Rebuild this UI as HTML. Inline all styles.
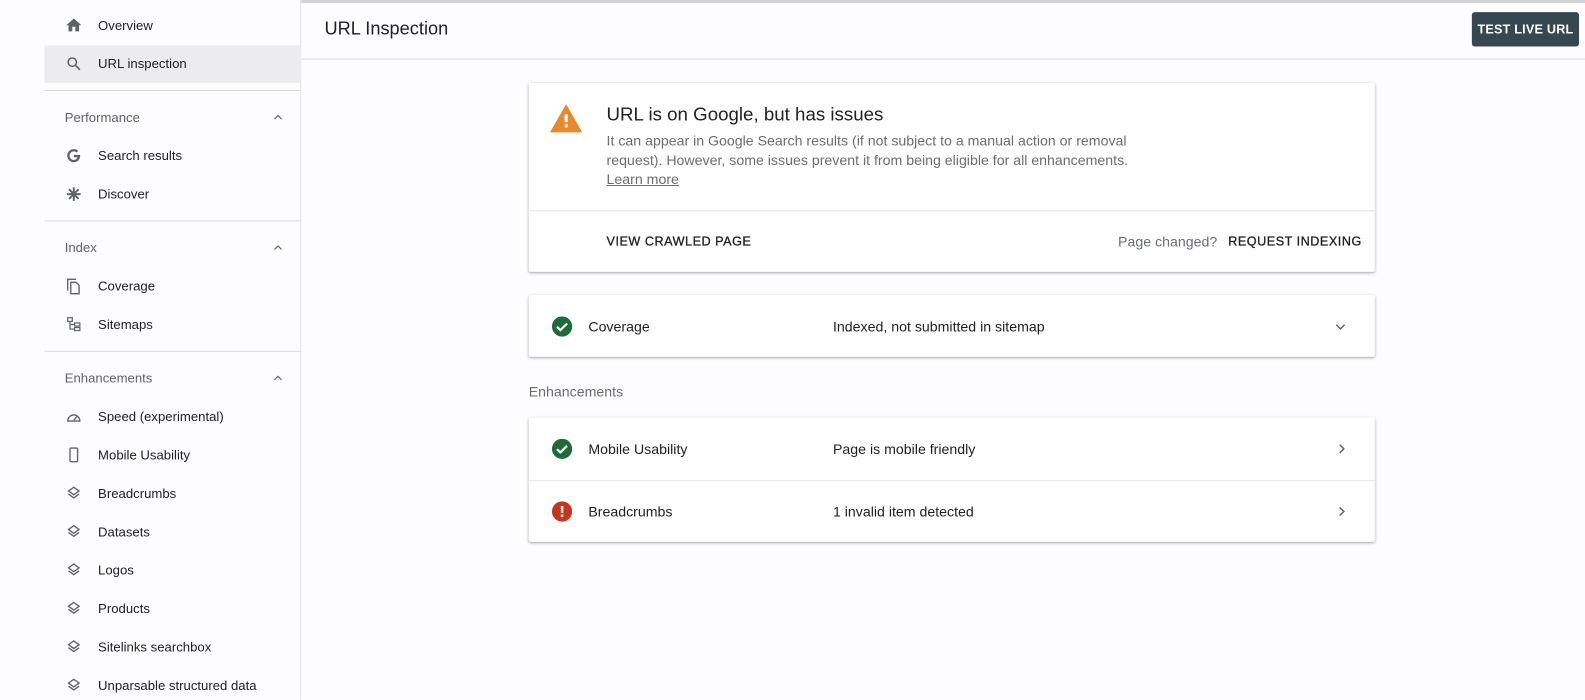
<!DOCTYPE html>
<html><head><meta charset="utf-8"><style>
*{margin:0;padding:0;box-sizing:border-box}
body{width:1585px;height:692px;overflow:hidden;background:#fdfcfe;font-family:"Liberation Sans",sans-serif;position:relative;color:#202124}
#w{position:absolute;left:0;top:0;width:1568px;height:685px;transform:scale(1.0109);transform-origin:0 0}
.a{position:absolute;white-space:nowrap}
.side{position:absolute;left:44px;top:0;width:254px;height:692px;background:#fdfcfe;border-right:1px solid #e2e2e4}
.it{position:absolute;left:53px;font-size:13px;color:#202124;transform:translateY(-50%)}
.hd{position:absolute;left:20px;font-size:13px;color:#5f6368;transform:translateY(-50%)}
.ic{position:absolute;left:20px;width:18px;height:18px;transform:translateY(-50%)}
.chev{position:absolute;left:224px;width:14px;height:14px;transform:translateY(-50%)}
.dv{position:absolute;left:0;width:254px;height:1px;background:#dcdcdf}
.card{position:absolute;left:523px;width:837px;background:#fff;box-shadow:0 1px 3px rgba(0,0,0,.28),0 1px 1px rgba(0,0,0,.08);border-radius:2px}
.t14{font-size:14px}
.caps{font-size:12.5px;letter-spacing:.5px;color:#202124;-webkit-text-stroke:.3px #202124}
</style></head><body><div id="w">
<div class="a" style="left:298px;top:0;width:1287px;height:3px;background:#d4d4d6"></div>
<div class="side">
 <svg class="ic" style="top:25px" viewBox="0 0 24 24"><path d="M10 20v-6h4v6h5v-8h3L12 3 2 12h3v8z" fill="#5f6368"/></svg>
 <div class="it" style="top:25px">Overview</div>
 <div class="a" style="left:0;top:45px;width:254px;height:37px;background:#ececee"></div>
 <svg class="ic" style="top:63px" viewBox="0 0 24 24"><circle cx="10" cy="10" r="5.5" fill="none" stroke="#5f6368" stroke-width="2"/><path d="M14 14l6 6" stroke="#5f6368" stroke-width="2.2"/></svg>
 <div class="it" style="top:63px">URL inspection</div>
 <div class="dv" style="top:89px"></div>
 <div class="hd" style="top:116px">Performance</div>
 <svg class="chev" style="top:116px" viewBox="0 0 24 24"><path d="M6 15l6-6 6 6" fill="none" stroke="#5f6368" stroke-width="2"/></svg>
 <svg class="ic" style="top:154px" viewBox="0 0 24 24"><path d="M20 11h-8v3h4.7c-.5 2.3-2.4 3.6-4.7 3.6a5.6 5.6 0 1 1 3.7-9.8l2.2-2.2A8.7 8.7 0 1 0 12 20.7c4.6 0 8.4-3.2 8.4-8.7 0-.3 0-.7-.4-1z" fill="#5f6368"/></svg>
 <div class="it" style="top:154px">Search results</div>
 <svg class="ic" style="top:192px" viewBox="0 0 24 24"><path d="M12 3v18M3 12h18M5.6 5.6l12.8 12.8M18.4 5.6L5.6 18.4" stroke="#5f6368" stroke-width="2.6"/></svg>
 <div class="it" style="top:192px">Discover</div>
 <div class="dv" style="top:218px"></div>
 <div class="hd" style="top:245px">Index</div>
 <svg class="chev" style="top:245px" viewBox="0 0 24 24"><path d="M6 15l6-6 6 6" fill="none" stroke="#5f6368" stroke-width="2"/></svg>
 <svg class="ic" style="top:283px" viewBox="0 0 24 24"><path d="M4 18V3h11M8 7h7l4 4v11H8z" fill="none" stroke="#5f6368" stroke-width="1.8"/></svg>
 <div class="it" style="top:283px">Coverage</div>
 <svg class="ic" style="top:321px" viewBox="0 0 24 24"><g fill="none" stroke="#5f6368" stroke-width="1.6"><rect x="4" y="3" width="6" height="5"/><rect x="13" y="10" width="7" height="4"/><rect x="13" y="16" width="7" height="4"/><path d="M7 8v10h6M7 12h6"/></g></svg>
 <div class="it" style="top:321px">Sitemaps</div>
 <div class="dv" style="top:347px"></div>
 <div class="hd" style="top:374px">Enhancements</div>
 <svg class="chev" style="top:374px" viewBox="0 0 24 24"><path d="M6 15l6-6 6 6" fill="none" stroke="#5f6368" stroke-width="2"/></svg>
 <svg class="ic" style="top:412px" viewBox="0 0 24 24"><path d="M4 18a8 8 0 1 1 16 0z" fill="none" stroke="#5f6368" stroke-width="1.8"/><path d="M12 17l4-5" stroke="#5f6368" stroke-width="1.8"/></svg>
 <div class="it" style="top:412px">Speed (experimental)</div>
 <svg class="ic" style="top:450px" viewBox="0 0 24 24"><rect x="7" y="3" width="10" height="18" rx="1.5" fill="none" stroke="#5f6368" stroke-width="1.8"/></svg>
 <div class="it" style="top:450px">Mobile Usability</div>
 <svg class="ic" style="top:488px" viewBox="0 0 24 24"><path d="M12 4l7 5-7 5-7-5zM5 13l7 5 7-5" fill="none" stroke="#5f6368" stroke-width="1.8"/></svg>
 <div class="it" style="top:488px">Breadcrumbs</div>
 <svg class="ic" style="top:526px" viewBox="0 0 24 24"><path d="M12 4l7 5-7 5-7-5zM5 13l7 5 7-5" fill="none" stroke="#5f6368" stroke-width="1.8"/></svg>
 <div class="it" style="top:526px">Datasets</div>
 <svg class="ic" style="top:564px" viewBox="0 0 24 24"><path d="M12 4l7 5-7 5-7-5zM5 13l7 5 7-5" fill="none" stroke="#5f6368" stroke-width="1.8"/></svg>
 <div class="it" style="top:564px">Logos</div>
 <svg class="ic" style="top:602px" viewBox="0 0 24 24"><path d="M12 4l7 5-7 5-7-5zM5 13l7 5 7-5" fill="none" stroke="#5f6368" stroke-width="1.8"/></svg>
 <div class="it" style="top:602px">Products</div>
 <svg class="ic" style="top:640px" viewBox="0 0 24 24"><path d="M12 4l7 5-7 5-7-5zM5 13l7 5 7-5" fill="none" stroke="#5f6368" stroke-width="1.8"/></svg>
 <div class="it" style="top:640px">Sitelinks searchbox</div>
 <svg class="ic" style="top:678px" viewBox="0 0 24 24"><path d="M12 4l7 5-7 5-7-5zM5 13l7 5 7-5" fill="none" stroke="#5f6368" stroke-width="1.8"/></svg>
 <div class="it" style="top:678px">Unparsable structured data</div>
</div>

<div class="a" style="left:321px;top:18px;font-size:18px;color:#202124">URL Inspection</div>
<div class="a" style="left:299px;top:58px;width:1286px;height:1px;background:#dcdcdf"></div>
<div class="a" style="left:1456px;top:12px;width:106px;height:34px;background:#37474f;border-radius:3px;color:#fff;font-size:12.5px;font-weight:bold;letter-spacing:.2px;text-align:center;line-height:34px">TEST LIVE URL</div>

<div class="card" style="top:82px;height:187px">
 <svg class="a" style="left:20px;top:20px" width="34" height="30" viewBox="0 0 34 30"><path d="M17 1L33 29H1z" fill="#e8892b"/><rect x="15.5" y="11" width="3" height="8" fill="#fff"/><rect x="15.5" y="21" width="3" height="3" fill="#fff"/></svg>
 <div class="a" style="left:77px;top:20px;font-size:18.5px;color:#202124">URL is on Google, but has issues</div>
 <div class="a t14" style="left:77px;top:48px;color:#6a6d71;line-height:19px">It can appear in Google Search results (if not subject to a manual action or removal<br>request). However, some issues prevent it from being eligible for all enhancements.<br><span style="text-decoration:underline">Learn more</span></div>
 <div class="a" style="left:0;top:126px;width:837px;height:1px;background:#e4e4e6"></div>
 <div class="a caps" style="left:77px;top:150px">VIEW CRAWLED PAGE</div>
 <div class="a t14" style="left:583px;top:149px;color:#6a6d71">Page changed?</div>
 <div class="a caps" style="left:692px;top:150px">REQUEST INDEXING</div>
</div>

<div class="card" style="top:292px;height:61px">
 <svg class="a" style="left:23px;top:21px" width="20" height="20" viewBox="0 0 20 20"><circle cx="10" cy="10" r="10" fill="#1e6b3a"/><path d="M5 10.3l3.3 3.2L15 7" fill="none" stroke="#fff" stroke-width="2.2"/></svg>
 <div class="a t14" style="left:59px;top:23px">Coverage</div>
 <div class="a t14" style="left:301px;top:23px">Indexed, not submitted in sitemap</div>
 <svg class="a" style="left:796px;top:24px" width="14" height="14" viewBox="0 0 24 24"><path d="M5 9l7 7 7-7" fill="none" stroke="#5f6368" stroke-width="2.5"/></svg>
</div>

<div class="a t14" style="left:523px;top:379px;color:#6a6d71">Enhancements</div>

<div class="card" style="top:413px;height:123px">
 <svg class="a" style="left:23px;top:21px" width="20" height="20" viewBox="0 0 20 20"><circle cx="10" cy="10" r="10" fill="#1e6b3a"/><path d="M5 10.3l3.3 3.2L15 7" fill="none" stroke="#fff" stroke-width="2.2"/></svg>
 <div class="a t14" style="left:59px;top:23px">Mobile Usability</div>
 <div class="a t14" style="left:301px;top:23px">Page is mobile friendly</div>
 <svg class="a" style="left:797px;top:24px" width="14" height="14" viewBox="0 0 24 24"><path d="M9 5l7 7-7 7" fill="none" stroke="#5f6368" stroke-width="2.5"/></svg>
 <div class="a" style="left:0;top:62px;width:837px;height:1px;background:#e8e8ea"></div>
 <svg class="a" style="left:23px;top:83px" width="20" height="20" viewBox="0 0 20 20"><circle cx="10" cy="10" r="10" fill="#c5361f"/><rect x="8.8" y="4.5" width="2.4" height="7" fill="#fff"/><rect x="8.8" y="13" width="2.4" height="2.4" fill="#fff"/></svg>
 <div class="a t14" style="left:59px;top:85px">Breadcrumbs</div>
 <div class="a t14" style="left:301px;top:85px">1 invalid item detected</div>
 <svg class="a" style="left:797px;top:86px" width="14" height="14" viewBox="0 0 24 24"><path d="M9 5l7 7-7 7" fill="none" stroke="#5f6368" stroke-width="2.5"/></svg>
</div>
</div></body></html>
